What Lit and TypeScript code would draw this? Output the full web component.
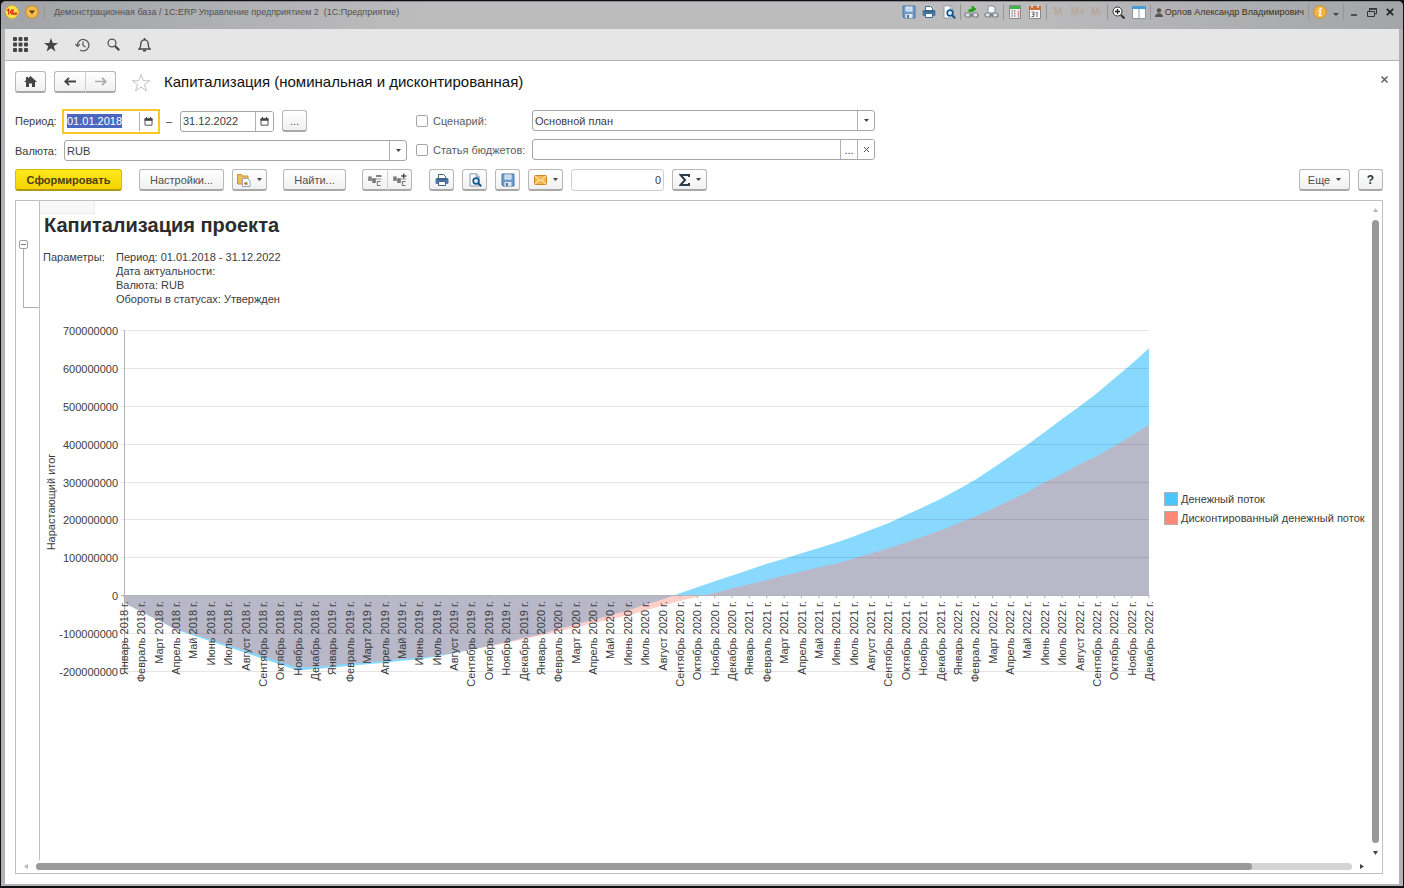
import { LitElement, html, svg, css } from "lit";
import { customElement } from "lit/decorators.js";

const MONTHS = [
  "Январь", "Февраль", "Март", "Апрель", "Май", "Июнь",
  "Июль", "Август", "Сентябрь", "Октябрь", "Ноябрь", "Декабрь",
];

// Cumulative totals in millions of roubles, one value per month from January 2018.
const CASH_FLOW = [
  -20, -44, -67, -91, -106, -122, -137, -152, -168, -183, -199, -195,
  -191, -186, -182, -178, -173, -169, -162, -153, -143, -134, -124, -113,
  -103, -89, -77, -65, -53, -40, -25, -11, 5, 21, 37, 52,
  67, 83, 96, 111, 125, 139, 155, 173, 190, 212, 232, 254,
  279, 305, 335, 366, 397, 431, 465, 498, 533, 572, 610, 652,
];
const DISCOUNTED = [
  -20, -44, -67, -90, -103, -117, -131, -146, -161, -176, -191, -189,
  -185, -181, -177, -173, -168, -165, -160, -152, -143, -135, -126, -116,
  -106, -95, -85, -74, -64, -53, -40, -27, -15, -4, 6, 18,
  29, 40, 52, 63, 74, 84, 97, 110, 124, 139, 155, 171,
  189, 208, 228, 250, 272, 298, 320, 345, 367, 394, 421, 449,
];

const PLOT = { left: 84, right: 1109, top: 11, bottom: 352, max: 700, min: -200 };
const px = (i: number) => PLOT.left + ((PLOT.right - PLOT.left) * i) / (CASH_FLOW.length - 1);
const py = (v: number) => PLOT.top + ((PLOT.max - v) * (PLOT.bottom - PLOT.top)) / (PLOT.max - PLOT.min);

const diskette = html`<svg width="14" height="14" viewBox="0 0 14 14">
  <path d="M1 1h12v12H2l-1-1z" fill="#6f9bcb" stroke="#4a76a8"/>
  <path d="M3.5 1.5h7v5h-7z" fill="#e8f0f8"/><path d="M4.5 3h5M4.5 4.8h5" stroke="#9bb8d6" stroke-width=".8"/>
  <path d="M3.5 9h7v4h-7z" fill="#dfe5ea"/><path d="M5 10h2v3H5z" fill="#4a76a8"/></svg>`;
const printer = html`<svg width="14" height="14" viewBox="0 0 14 14">
  <path d="M3.5 5V1.5h5l2 2V5" fill="#fff" stroke="#3f6488"/>
  <rect x=".5" y="5" width="13" height="6" rx="1.6" fill="#4d7aa5"/><path d="M1.5 6.2h11" stroke="#2d5273"/>
  <path d="M3.5 8.5h7v4h-7z" fill="#fff" stroke="#3f6488"/></svg>`;
const preview = html`<svg width="14" height="14" viewBox="0 0 14 14">
  <path d="M2 .8h6.5l2.5 2.6V13H2z" fill="#fff" stroke="#8a99a8"/><path d="M8.2.8v3H11" fill="none" stroke="#8a99a8"/>
  <circle cx="8" cy="8" r="2.8" fill="#e6f2fa" stroke="#12588c" stroke-width="1.7"/>
  <path d="M10 10l3.2 3.3" stroke="#12588c" stroke-width="2"/></svg>`;
const calendar = html`<svg width="9" height="9" viewBox="0 0 9 9">
  <path d="M1 1.8h7v6.4H1z" fill="#fff" stroke="#555"/><path d="M.5 2.6h8" stroke="#444" stroke-width="2.4"/><path d="M2.5 0v2M6.5 0v2" stroke="#444"/></svg>`;
const caret = html`<svg width="5" height="3" viewBox="0 0 5 3"><path d="M0 0h5L2.500 3z" fill="#444"/></svg>`;
const link = svg`<rect x="1" y="8" width="6" height="4" rx="2" fill="#e4e6e8" stroke="#777f86" stroke-width="1.2"/>
  <rect x="8" y="8" width="6" height="4" rx="2" fill="#e4e6e8" stroke="#777f86" stroke-width="1.2"/><path d="M5 10h5" stroke="#777f86" stroke-width="1.2"/>`;
const groupIcon = (plus: boolean) => html`<svg width="14" height="14" viewBox="0 0 14 14" fill="none" stroke="#6d6d6d">
  <rect x="0" y="3" width="4" height="5" fill="#bbb" stroke="none"/><rect x="4" y="5" width="4" height="5" fill="#aaa" stroke="none"/>
  <path d="M1 8V4.500h2V8M1 6.300h2M5 6v3.500h2V6zM5 7.700h2" stroke="#666" stroke-width=".9"/><path d="M12.500 8.500H9.300v4h3.200"/>
  <path d="M8 3h5.500" stroke="#444" stroke-width="1.300"/><path d="M8 6h5.500" stroke="#999"/>
  ${plus ? svg`<path d="M10.700 .5v5" stroke="#444" stroke-width="1.300"/>` : ""}</svg>`;

@customElement("report-chart")
export class ReportChart extends LitElement {
  static styles = css`
    :host { display: block; }
    svg { display: block; width: 100%; }
    text { font: 11px "Liberation Sans", Arial, sans-serif; fill: #3c3c3c; }
    .grid { stroke: #000; stroke-opacity: 0.1; }
    .axis { stroke: #b4b4b4; }
    .flow { fill: #4cc5ff; }
    .discounted { fill: #ff8877; }
    .area.flow { fill-opacity: 0.66; }
    .area.discounted { fill-opacity: 0.4; }
    .key { stroke: #b0b0b0; }
  `;

  private area(values: number[]) {
    const line = values.map((v, i) => `${px(i).toFixed(1)},${py(v).toFixed(1)}`).join(" ");
    return `${px(0)},${py(0)} ${line} ${px(values.length - 1)},${py(0)}`;
  }

  render() {
    const ticks = [700, 600, 500, 400, 300, 200, 100, 0, -100, -200];
    return html`<svg viewBox="0 0 1328 380" role="img" aria-label="Капитализация проекта">
      <polygon class="area flow" points=${this.area(CASH_FLOW)}></polygon>
      <polygon class="area discounted" points=${this.area(DISCOUNTED)}></polygon>
      ${ticks.map((t) => {
        const y = Math.round(py(t)) + 0.5;
        return svg`<line class=${t ? "grid" : "axis"} x1=${PLOT.left - 3} x2=${PLOT.right} y1=${y} y2=${y}></line>
          <text x=${PLOT.left - 6} y=${y + 4} text-anchor="end">${t * 1000000}</text>`;
      })}
      <line class="axis" x1="84.5" x2="84.5" y1=${PLOT.top} y2=${PLOT.bottom}></line>
      ${CASH_FLOW.map((_, i) => {
        const label = `${MONTHS[i % 12]} ${2018 + Math.floor(i / 12)} г.`;
        return svg`<line class="axis" x1=${px(i)} x2=${px(i)} y1=${py(0)} y2=${py(0) + 3}></line>
          <text transform="translate(${px(i) + 4} ${py(0) + 6}) rotate(-90)" text-anchor="end">${label}</text>`;
      })}
      <text transform="translate(15 183) rotate(-90)" text-anchor="middle">Нарастающий итог</text>
      <rect class="key flow" x="1124.5" y="173.5" width="13" height="13"></rect>
      <text x="1141" y="184">Денежный поток</text>
      <rect class="key discounted" x="1124.5" y="192.5" width="13" height="13"></rect>
      <text x="1141" y="203">Дисконтированный денежный поток</text>
    </svg>`;
  }
}

@customElement("app-root")
export class AppRoot extends LitElement {
  static styles = css`
    :host {
      display: flex; flex-direction: column; box-sizing: border-box; height: 100vh; min-height: 600px;
      padding: 1px 1px 2px 1px; background: #101014; color: #3c3c3c;
      font: 11px/14px "Liberation Sans", Arial, sans-serif;
    }
    * { box-sizing: border-box; }
    button, input, select { font: inherit; color: inherit; margin: 0; }
    button { display: flex; align-items: center; justify-content: center; padding: 0; }
    svg { flex: none; display: block; }
    .frame { flex: 1; display: flex; flex-direction: column; min-height: 0; background: #b3b3b5; border-radius: 5px 5px 0 0; padding: 0 4px 2px 4px; }
    .titlebar { height: 28px; padding: 0 4px 7px; margin: 0 -4px; display: flex; align-items: center; justify-content: space-between;
      border-top: 1px solid #8a8a8c; border-radius: 5px 5px 0 0;
      background: linear-gradient(90deg, #a2a3a6, #bcbcbd 30%, #bcbcbd 72%, #a4a5a8); }
    .group { display: flex; align-items: center; }
    .tb { width: 20px; height: 20px; border: 0; background: none; }
    .tb.narrow { width: 18px; }
    .tb.menu { margin: 0 1px 0 3px; }
    .mem { color: #b89f8f; font-size: 10px; }
    .sep { width: 1px; height: 16px; background: #969698; margin: 0 1px; }
    .app-name { font-size: 9px; color: #505052; margin-left: 8px; white-space: nowrap; }
    .user { border: 0; background: none; font-size: 9px; color: #3c3214; gap: 2px; padding: 0 3px; white-space: nowrap; }
    .info { border: 0; background: none; gap: 6px; width: 32px; }
    .tools { height: 32px; display: flex; align-items: center; gap: 11px; padding: 0 5px; background: #e6e6e6; border-bottom: 1px solid #b4b4b4; }
    .tool { width: 20px; height: 20px; border: 0; background: none; }
    .page { flex: 1; min-height: 0; display: flex; flex-direction: column; background: #fff; padding: 10px 16px 10px 10px; }
    .nav { display: flex; align-items: center; height: 22px; }
    .btn { height: 22px; border: 1px solid #b8b8b8; border-bottom: 2px solid #a8a8a8; border-radius: 3px; background: linear-gradient(#fff, #f0f0f0); white-space: nowrap; gap: 6px; color: #505050; }
    .home { width: 31px; margin-right: 8px; }
    .pair { display: flex; }
    .pair .btn:first-child { border-radius: 3px 0 0 3px; border-right: 0; }
    .pair .btn:last-child { border-radius: 0 3px 3px 0; border-left-color: #d0d0d0; }
    .pair .arrow { width: 31px; }
    .fav { width: 20px; height: 20px; border: 0; background: none; margin: 0 13px 0 15px; }
    h1 { font-size: 15px; line-height: 20px; font-weight: 400; color: #111; margin: 0; flex: 1; }
    .close { width: 15px; height: 15px; border: 0; background: none; margin: 0 -9px 6px 0; }
    .filters { display: flex; align-items: flex-start; gap: 9px; margin-top: 17px; }
    .left, .right { display: grid; align-items: center; }
    .left { grid-template-columns: 49px 343px; row-gap: 8px; }
    .right { grid-template-columns: 116px 343px; row-gap: 8px; }
    .period { display: flex; align-items: center; }
    .field { display: flex; height: 21px; border: 1px solid #a6a6a6; border-radius: 3px; background: #fff; overflow: hidden; }
    .field input { flex: 1; min-width: 0; border: 0; outline: 0; padding: 0 2px; background: none; }
    .field button { border: 0; border-left: 1px solid #b0b0b0; background: #fff; width: 17px; }
    .date { width: 94px; }
    .date button { width: 18px; }
    .date:focus-within { outline: 2px solid #f8c828; border-color: #fff; overflow: visible; border-radius: 0; }
    ::selection { background: #4a68c0; color: #fff; }
    .dash { width: 22px; text-align: center; }
    .more { width: 25px; margin-left: 8px; }
    .combo { display: grid; grid-template-columns: 1fr 17px; }
    .combo select { grid-area: 1 / 1 / 2 / 3; appearance: none; border: 0; outline: 0; background: none; padding: 0 2px; height: 19px; }
    .combo .drop { grid-area: 1 / 2; border-left: 1px solid #b0b0b0; pointer-events: none; display: flex; align-items: center; justify-content: center; }
    .check { display: flex; align-items: center; gap: 5px; color: #5c5c5c; white-space: nowrap; }
    .check input { appearance: none; flex: none; width: 12px; height: 12px; border: 1px solid #a6a6a6; border-radius: 2px; background: #fff; }
    .commands { display: flex; align-items: center; margin-top: 8px; gap: 8px; }
    .primary { width: 107px; margin-right: 9px; font-weight: 700; color: #4a4014; background: linear-gradient(#ffe81c, #f5d400); border-color: #d8bc00; border-bottom-color: #b09810; }
    .settings { width: 85px; }
    .split { width: 35px; }
    .find { width: 63px; margin: 0 8px; }
    .sq { width: 25px; }
    .commands > .pair { margin-right: 9px; }
    .sum { width: 93px; height: 22px; border: 1px solid #d0d0d0; border-radius: 3px; text-align: right; padding: 0 2px; }
    .spacer { flex: 1; }
    .extra { width: 51px; }
    .help { font-size: 12px; font-weight: 700; color: #333; }
    .sheet { flex: 1; min-height: 0; margin-top: 9px; display: grid; grid-template: 1fr 13px / 24px 1fr 14px; border: 1px solid #c0c0c0; overflow: hidden; }
    .gutter { border-right: 1px solid #c0c0c0; padding: 39px 0 0 3px; }
    .fold { width: 9px; height: 9px; border: 1px solid #a0a0a0; border-radius: 2px; background: #fff; }
    .fold i { width: 5px; height: 1px; background: #777; }
    .bracket { margin-left: 4px; height: 59px; border-left: 1px solid #b0b0b0; border-bottom: 1px solid #b0b0b0; }
    .report { overflow: hidden; min-width: 0; }
    .cell { width: 55px; height: 13px; background: #f8f8f8; border: 1px solid #ececec; border-width: 0 1px 1px 0; }
    h2 { margin: 0 0 14px 4px; font-size: 20px; line-height: 22px; color: #2c2c2c; }
    .params { display: grid; grid-template-columns: 73px 1fr; margin: 0 0 13px 3px; line-height: 14px; }
    .params p { margin: 0; }
    .vbar { display: flex; flex-direction: column; align-items: center; justify-content: space-between; padding: 7px 0 5px; gap: 8px; }
    .vthumb { width: 7px; flex: 1; border-radius: 4px; background: #999; }
    .hbar { grid-column: 1 / 4; display: flex; align-items: center; padding: 0 18px 0 8px; gap: 8px; }
    .htrack { flex: 1; height: 7px; border-radius: 4px; background: #d4d4d4; }
    .hthumb { width: 92.4%; height: 7px; border-radius: 4px; background: #999; }
  `;

  firstUpdated() {
    const from = this.renderRoot.querySelector<HTMLInputElement>("#from");
    from?.focus();
    from?.select();
  }

  private titlebar() {
    return html`<header class="titlebar">
      <div class="group">
        <svg width="14" height="14" viewBox="0 0 14 14"><circle cx="7" cy="7" r="6.500" fill="#fde24a" stroke="#e0b030"/>
          <path d="M2 5.500L3.700 4.300V9.500M9 5.300a2.200 2.200 0 1 0-1.500 4h4.500M8.400 6.400a.9.900 0 1 0-.8 1.600h4.400" fill="none" stroke="#d8201c" stroke-width="1.100"/></svg>
        <button class="tb menu" aria-label="Меню"><svg width="14" height="14" viewBox="0 0 14 14"><circle cx="7" cy="7" r="6.300" fill="#f6b950" stroke="#c88c28"/><path d="M4 5.500h6L7 9z" fill="#5a3c10"/></svg></button>
        <span class="sep"></span>
        <span class="app-name">Демонстрационная база / 1С:ERP Управление предприятием 2&nbsp; (1С:Предприятие)</span>
      </div>
      <div class="group">
        <button class="tb" aria-label="Сохранить">${diskette}</button>
        <button class="tb" aria-label="Печать">${printer}</button>
        <button class="tb" aria-label="Просмотр">${preview}</button>
        <span class="sep"></span>
        <button class="tb" aria-label="Получить ссылку"><svg width="15" height="14" viewBox="0 0 15 14">${link}<path d="M5 7V4.500h3V7M8 1l4 3-4 3z" fill="#2ca01c" stroke="#2ca01c"/></svg></button>
        <button class="tb" aria-label="Перейти по ссылке"><svg width="15" height="14" viewBox="0 0 15 14"><path d="M4 1h5l2 2v5H4z" fill="#f6f8fa" stroke="#8090a0"/>${link}</svg></button>
        <span class="sep"></span>
        <button class="tb" aria-label="Калькулятор"><svg width="12" height="14" viewBox="0 0 12 14"><path d="M.500.500h11v13H.500z" fill="#f4f4f4" stroke="#8a8a8a"/><path d="M1 1h10v3H1z" fill="#3cb44a"/><path d="M2.500 6h5M2.500 8.500h5M2.500 11h5" stroke="#888" stroke-width="1.500" stroke-dasharray="1.500 1"/><path d="M9.500 5.500v7" stroke="#d88" stroke-width="1.500"/></svg></button>
        <button class="tb" aria-label="Календарь"><svg width="12" height="14" viewBox="0 0 12 14"><path d="M.500 1.500h11v12H.500z" fill="#fafafa" stroke="#8a8a8a"/><path d="M0 1h12v4H0z" fill="#c8703c"/><path d="M3 0v3M9 0v3" stroke="#fff"/><path d="M2.500 7h2.500v4.500H2.500M3 9.200h2M8 12V7L6.800 8" fill="none" stroke="#667"/></svg></button>
        <span class="sep"></span>
        <button class="tb mem">M</button><button class="tb mem">M+</button><button class="tb narrow mem">M-</button>
        <span class="sep"></span>
        <button class="tb" aria-label="Масштаб"><svg width="13" height="13" viewBox="0 0 13 13"><circle cx="5.500" cy="5.500" r="4.500" fill="#f8f8f8" stroke="#333"/><path d="M3 5.500h5M5.500 3v5" stroke="#222" stroke-width="1.300"/><path d="M9 9l3.500 3.500" stroke="#333" stroke-width="2"/></svg></button>
        <button class="tb" aria-label="Панели"><svg width="14" height="13" viewBox="0 0 14 13"><path d="M.500.500h13v12H.500z" fill="#fff" stroke="#8a98a6"/><path d="M0 0h14v3H0z" fill="#4a9ad4"/><path d="M7 3v10" stroke="#8a98a6"/></svg></button>
        <span class="sep"></span>
        <button class="user"><svg width="8" height="9" viewBox="0 0 8 9" fill="#555"><circle cx="4" cy="2.500" r="2.200"/><path d="M0 9c0-5 8-5 8 0z"/></svg>Орлов Александр Владимирович</button>
        <span class="sep"></span>
        <button class="info" aria-label="Справка"><svg width="14" height="14" viewBox="0 0 14 14"><circle cx="7" cy="7" r="6.300" fill="#f4b440" stroke="#d09028"/><circle cx="7.500" cy="3.700" r="1.100" fill="#fff"/><path d="M5.500 6h2L6.500 10.500h2" fill="none" stroke="#fff" stroke-width="1.400"/></svg><svg width="6" height="8" viewBox="0 0 6 8"><path d="M0 5h6L3 8z" fill="#444"/></svg></button>
        <span class="sep"></span>
        <button class="tb narrow" aria-label="Свернуть"><svg width="7" height="8" viewBox="0 0 7 8"><path d="M0 7h6" stroke="#333" stroke-width="1.500"/></svg></button>
        <button class="tb narrow" aria-label="Восстановить"><svg width="10" height="9" viewBox="0 0 10 9" fill="none" stroke="#333"><path d="M2.500 3V.700h7v5H7.500"/><path d="M.500 3.500h7v5h-7z"/><path d="M2 1h8" stroke-width="1.500"/></svg></button>
        <button class="tb narrow" aria-label="Закрыть"><svg width="8" height="8" viewBox="0 0 8 8"><path d="M.800.800l6.400 6.400M7.200.800L.800 7.200" stroke="#222" stroke-width="1.700"/></svg></button>
      </div>
    </header>`;
  }

  private tools() {
    return html`<nav class="tools">
      <button class="tool" aria-label="Разделы"><svg width="15" height="15" viewBox="0 0 15 15" fill="#444">${[0, 1, 2].map((r) => [0, 1, 2].map((c) => svg`<rect x=${c * 5.5} y=${r * 5.5} width="4" height="4" rx="1"></rect>`))}</svg></button>
      <button class="tool" aria-label="Избранное"><svg width="14" height="14" viewBox="0 0 14 14"><path d="M7 0l1.800 5H14L9.800 8.200 11.400 13.400 7 10.300 2.600 13.400 4.200 8.200 0 5h5.200z" fill="#444"/></svg></button>
      <button class="tool" aria-label="История"><svg width="15" height="14" viewBox="0 0 15 14" fill="none" stroke="#555" stroke-width="1.200"><path d="M2.500 7.500A5.700 5.700 0 1 1 5 11.900"/><path d="M.300 6l2.200 2.500L5 6.200"/><path d="M8 3.500v4l2.500 1.500"/></svg></button>
      <button class="tool" aria-label="Поиск"><svg width="13" height="13" viewBox="0 0 13 13"><circle cx="5" cy="5" r="3.900" fill="none" stroke="#555" stroke-width="1.300"/><path d="M8 8l4.200 4.200" stroke="#444" stroke-width="2.200"/></svg></button>
      <button class="tool" aria-label="Оповещения"><svg width="13" height="14" viewBox="0 0 13 14"><path d="M1 11c1.800-1.500 1.800-3 1.800-5 0-5.500 7.400-5.500 7.400 0 0 2 0 3.500 1.800 5z" fill="none" stroke="#444" stroke-width="1.300"/><path d="M6.500 0v2M5 12.700h3" stroke="#444" stroke-width="1.500"/></svg></button>
    </nav>`;
  }

  private filters() {
    return html`<div class="filters">
      <div class="left">
        <label for="from">Период:</label>
        <div class="period">
          <div class="field date"><input id="from" value="01.01.2018"><button aria-label="Начало периода">${calendar}</button></div>
          <span class="dash">–</span>
          <div class="field date"><input aria-label="Конец периода" value="31.12.2022"><button aria-label="Выбрать дату">${calendar}</button></div>
          <button class="btn more" aria-label="Выбрать период">...</button>
        </div>
        <label for="currency">Валюта:</label>
        <div class="field combo"><select id="currency"><option>RUB</option></select><span class="drop">${caret}</span></div>
      </div>
      <div class="right">
        <label class="check"><input type="checkbox">Сценарий:</label>
        <div class="field combo"><select aria-label="Сценарий"><option>Основной план</option></select><span class="drop">${caret}</span></div>
        <label class="check"><input type="checkbox">Статья бюджетов:</label>
        <div class="field"><input aria-label="Статья бюджетов"><button aria-label="Выбрать">...</button><button aria-label="Очистить"><svg width="5" height="5" viewBox="0 0 5 5"><path d="M0 0l5 5M5 0L0 5" stroke="#555"/></svg></button></div>
      </div>
    </div>`;
  }

  private commands() {
    return html`<div class="commands">
      <button class="btn primary">Сформировать</button>
      <button class="btn settings">Настройки...</button>
      <button class="btn split" aria-label="Варианты отчета"><svg width="14" height="14" viewBox="0 0 14 14"><path d="M.500 11V1.500h4l1 1.500H11v8z" fill="#f0bd58" stroke="#c8923c"/><path d="M5.500 5.500h5l2.500 2.500v5.500H5.500z" fill="#fff" stroke="#9aa4ae"/><circle cx="8.500" cy="10.500" r="1.300" fill="#d85040"/><path d="M10 9v3" stroke="#58a050"/></svg>${caret}</button>
      <button class="btn find">Найти...</button>
      <div class="pair"><button class="btn sq" aria-label="Свернуть группы">${groupIcon(false)}</button><button class="btn sq" aria-label="Развернуть группы">${groupIcon(true)}</button></div>
      <button class="btn sq" aria-label="Печать">${printer}</button>
      <button class="btn sq" aria-label="Предварительный просмотр">${preview}</button>
      <button class="btn sq" aria-label="Сохранить">${diskette}</button>
      <button class="btn split" aria-label="Отправить"><svg width="13" height="10" viewBox="0 0 13 10"><rect x=".500" y=".500" width="12" height="9" rx="1" fill="#f3b94e" stroke="#cb8a24"/><path d="M1 1l5.500 5L12 1M1 9l4-4M12 9L8 5" fill="none" stroke="#fff0c8"/></svg>${caret}</button>
      <input class="sum" aria-label="Сумма" value="0">
      <button class="btn split" aria-label="Итоги"><svg width="11" height="12" viewBox="0 0 11 12"><path d="M10 3V1H1.500L6 6l-4.500 5H10V9" fill="none" stroke="#2c3e4c" stroke-width="2"/></svg>${caret}</button>
      <span class="spacer"></span>
      <button class="btn extra">Еще ${caret}</button>
      <button class="btn sq help">?</button>
    </div>`;
  }

  render() {
    return html`<div class="frame">
      ${this.titlebar()} ${this.tools()}
      <main class="page">
        <div class="nav">
          <button class="btn home" aria-label="Домой"><svg width="13" height="11" viewBox="0 0 13 11"><path d="M6.500 0L13 6h-2v5H8V7.500H5V11H2V6H0L2 4.200V1h2v1.300z" fill="#444"/></svg></button>
          <div class="pair">
            <button class="btn arrow" aria-label="Назад"><svg width="12" height="9" viewBox="0 0 12 9" fill="none" stroke="#444" stroke-width="1.900"><path d="M12 4.500H1.500M5 .800L1.300 4.500 5 8.200"/></svg></button>
            <button class="btn arrow" aria-label="Вперед"><svg width="12" height="9" viewBox="0 0 12 9" fill="none" stroke="#aaa" stroke-width="1.700"><path d="M0 4.500h10.500M7 .800l3.700 3.700L7 8.200"/></svg></button>
          </div>
          <button class="fav" aria-label="В избранное"><svg width="20" height="19" viewBox="0 0 20 19"><path d="M10 1.500l2.200 6.200h6.500l-5.200 3.900 2 6.300L10 14.100 4.500 17.900l2-6.300L1.300 7.700h6.500z" fill="#fff" stroke="#c0c4c8"/></svg></button>
          <h1>Капитализация (номинальная и дисконтированная)</h1>
          <button class="close" aria-label="Закрыть"><svg width="7" height="7" viewBox="0 0 7 7"><path d="M.500.500l6 6M6.500.500l-6 6" stroke="#555" stroke-width="1.300"/></svg></button>
        </div>
        ${this.filters()} ${this.commands()}
        <section class="sheet">
          <div class="gutter"><button class="fold" aria-label="Свернуть"><i></i></button><div class="bracket"></div></div>
          <div class="report">
            <div class="cell"></div>
            <h2>Капитализация проекта</h2>
            <div class="params"><span>Параметры:</span>
              <div><p>Период: 01.01.2018 - 31.12.2022</p><p>Дата актуальности:</p><p>Валюта: RUB</p><p>Обороты в статусах: Утвержден</p></div>
            </div>
            <report-chart></report-chart>
          </div>
          <div class="vbar">
            <svg width="5" height="4" viewBox="0 0 5 4"><path d="M0 4h5L2.500 0z" fill="#b8b8b8"/></svg>
            <div class="vthumb"></div>
            <svg width="5" height="4" viewBox="0 0 5 4"><path d="M0 0h5L2.500 4z" fill="#444"/></svg>
          </div>
          <div class="hbar">
            <svg width="4" height="5" viewBox="0 0 4 5"><path d="M4 0v5L0 2.500z" fill="#b8b8b8"/></svg>
            <div class="htrack"><div class="hthumb"></div></div>
            <svg width="4" height="5" viewBox="0 0 4 5"><path d="M0 0v5l4-2.500z" fill="#444"/></svg>
          </div>
        </section>
      </main>
    </div>`;
  }
}
